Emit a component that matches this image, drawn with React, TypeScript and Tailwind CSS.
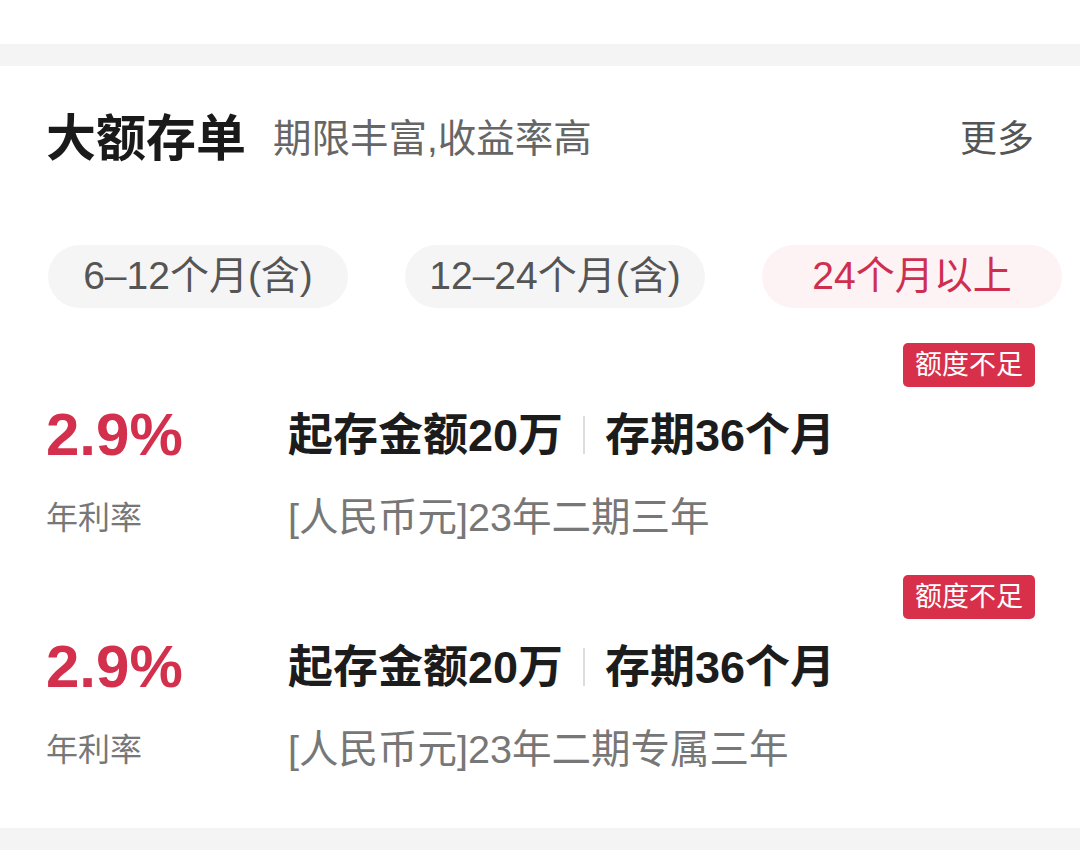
import React from 'react';

const font = { fontFamily: '"Liberation Sans", "Noto Sans CJK SC", sans-serif' };

const tabs = [
  { label: '6–12个月(含)', active: false },
  { label: '12–24个月(含)', active: false },
  { label: '24个月以上', active: true },
];

const products = [
  { rate: '2.9%', name: '[人民币元]23年二期三年' },
  { rate: '2.9%', name: '[人民币元]23年二期专属三年' },
];

const ProductRow = ({ rate, name }: { rate: string; name: string }) => (
  <div className="flex flex-col">
    {/* 额度标签 */}
    <div className="flex justify-end pr-[45px]">
      <span className="w-[132px] h-[44px] rounded-[5px] bg-[#d8304a] text-white text-[27px] flex items-center justify-center">
        额度不足
      </span>
    </div>

    <div className="flex items-center h-[96px] pl-[46px]">
      <div className="w-[242px] text-[60px] font-bold text-[#d3304d] leading-none">{rate}</div>
      <div className="flex items-center text-[45px] font-bold text-[#1c1c1c] leading-none">
        <span>起存金额20万</span>
        <span className="w-[2px] h-[38px] bg-[#dddddd] mx-[20px]"></span>
        <span>存期36个月</span>
      </div>
    </div>

    <div className="flex items-center h-[70px] pl-[46px]">
      <div className="w-[242px] text-[32px] text-[#777777] leading-none">年利率</div>
      <div className="text-[39.5px] text-[#777777] leading-none">{name}</div>
    </div>
  </div>
);

export default function App() {
  return (
    <div className="w-[1080px] h-[858px] bg-white overflow-hidden" style={font}>
      <div className="h-[44px] bg-white"></div>
      <div className="h-[22px] bg-[#f4f4f4]"></div>

      {/* 标题栏 */}
      <div className="h-[146px] flex items-center justify-between pl-[46px] pr-[46px]">
        <div className="flex items-center">
          <h2 className="text-[50px] font-bold text-[#1a1a1a] leading-none">大额存单</h2>
          <span className="ml-[27px] text-[38.5px] text-[#666666] leading-none">期限丰富,收益率高</span>
        </div>
        <span className="text-[37px] text-[#555555] leading-none">更多</span>
      </div>

      {/* 期限筛选 */}
      <div className="flex gap-[57px] pl-[48px] mt-[33px]">
        {tabs.map((t) => (
          <div
            key={t.label}
            className={
              t.active
                ? 'w-[300px] h-[63px] rounded-full bg-[#fdf2f4] text-[#cf2f4f] text-[39px] flex items-center justify-center'
                : 'w-[300px] h-[63px] rounded-full bg-[#f5f5f5] text-[#555555] text-[39px] flex items-center justify-center'
            }
          >
            {t.label}
          </div>
        ))}
      </div>

      <div className="mt-[35px] flex flex-col gap-[22px]">
        {products.map((p) => (
          <ProductRow key={p.name} rate={p.rate} name={p.name} />
        ))}
      </div>

      <div className="mt-[43px] h-[22px] bg-[#f4f4f4]"></div>
    </div>
  );
}
